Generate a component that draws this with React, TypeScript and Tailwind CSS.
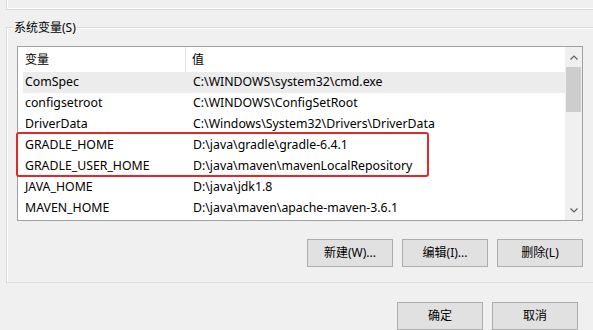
import React from "react";

const rows: [string, string][] = [
  ["ComSpec", "C:\\WINDOWS\\system32\\cmd.exe"],
  ["configsetroot", "C:\\WINDOWS\\ConfigSetRoot"],
  ["DriverData", "C:\\Windows\\System32\\Drivers\\DriverData"],
  ["GRADLE_HOME", "D:\\java\\gradle\\gradle-6.4.1"],
  ["GRADLE_USER_HOME", "D:\\java\\maven\\mavenLocalRepository"],
  ["JAVA_HOME", "D:\\java\\jdk1.8"],
  ["MAVEN_HOME", "D:\\java\\maven\\apache-maven-3.6.1"],
];

function Btn({ label, className = "" }: { label: string; className?: string }) {
  return (
    <div
      className={
        "h-[28px] w-[86px] flex items-center justify-center bg-[#e1e1e1] border border-[#adadad] text-[12px] text-black " +
        className
      }
    >
      {label}
    </div>
  );
}

export default function App() {
  return (
    <div
      className="w-[593px] h-[330px] overflow-hidden bg-[#f0f0f0] relative flex flex-col"
      style={{ fontFamily: '"Segoe UI", "Noto Sans", "Noto Sans CJK SC", sans-serif' }}
    >
      {/* previous group bottom */}
      <div className="h-[10px] ml-[6px] w-[600px] border-l border-b border-[#dcdcdc] shadow-[inset_1px_-1px_0_#ffffff]" />
      {/* group box */}
      <div className="mt-[17px] ml-[6px] w-[600px] border border-[#dcdcdc] shadow-[inset_1px_1px_0_#ffffff] relative pl-[10px] pt-[18px] pb-[15px]">
        <div className="absolute left-[6px] top-[-9px] px-[1px] bg-[#f0f0f0] text-[12px] leading-[17px] text-black">
          系统变量(S)
        </div>
        {/* list */}
        <div className="w-[566px] h-[175px] border border-[#a0a0a0] bg-white flex relative">
          <div className="flex-1 flex flex-col">
            <div className="h-[25px] flex text-[12px] text-black items-stretch">
              <div className="w-[168px] pl-[7px] flex items-center border-r border-[#e5e5e5]">变量</div>
              <div className="pl-[6px] flex items-center">值</div>
            </div>
            {rows.map(([k, v], i) => (
              <div
                key={k}
                className={
                  "h-[21px] flex items-center text-[12.3px] text-black ml-[5px] " +
                  (i === 0 ? "bg-[#ececec]" : "")
                }
              >
                <div className="w-[164px] pl-[2px] whitespace-nowrap">{k}</div>
                <div className="pl-[6px] whitespace-nowrap">{v}</div>
              </div>
            ))}
          </div>
          {/* scrollbar */}
          <div className="w-[17px] bg-[#f0f0f0] flex flex-col items-center">
            <div className="h-[20px] w-full flex items-center justify-center">
              <svg width="8" height="5" viewBox="0 0 8 5">
                <path d="M0.5 4.5 L4 1 L7.5 4.5" fill="none" stroke="#606060" strokeWidth="1.2" />
              </svg>
            </div>
            <div className="w-[15px] h-[45px] bg-[#cdcdcd]" />
            <div className="flex-1" />
            <div className="h-[19px] w-full flex items-center justify-center">
              <svg width="8" height="5" viewBox="0 0 8 5">
                <path d="M0.5 0.5 L4 4 L7.5 0.5" fill="none" stroke="#606060" strokeWidth="1.2" />
              </svg>
            </div>
          </div>
          {/* red annotation */}
          <div className="absolute left-[-2px] top-[85px] w-[413px] h-[45px] border-2 border-[#e02a2a] rounded-[3px]" />
        </div>
        <div className="mt-[18px] w-[566px] flex justify-end gap-[9px]">
          <Btn label="新建(W)..." />
          <Btn label="编辑(I)..." />
          <Btn label="删除(L)" />
        </div>
      </div>
      <div className="mt-[19px] w-[578px] flex justify-end gap-[9px]">
        <Btn label="确定" />
        <Btn label="取消" />
      </div>
    </div>
  );
}
